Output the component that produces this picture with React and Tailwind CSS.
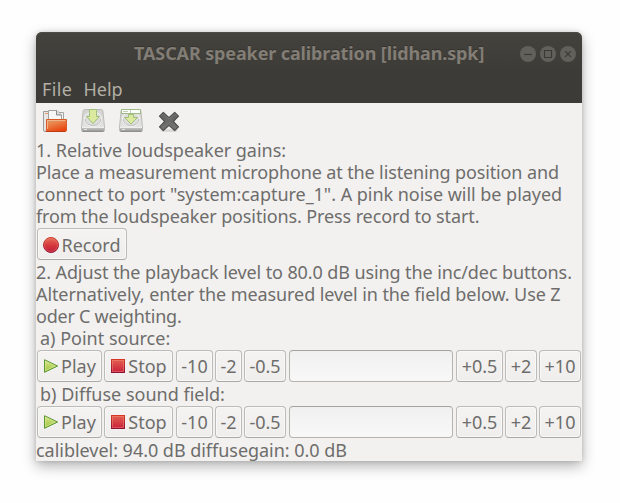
function FolderIcon() {
  return (
    <svg className="size-6 shrink-0" viewBox="0 0 24 24" fill="none">
      <defs>
        <linearGradient id="folder" x1="0" y1="0" x2="0.5" y2="1">
          <stop offset="0" stopColor="#dfa16c" />
          <stop offset="0.45" stopColor="#ea8047" />
          <stop offset="1" stopColor="#e8480f" />
        </linearGradient>
      </defs>
      <path d="M0.5 2.5H6V22.5H2Q0.5 22.5 0.5 21Z" fill="#e6e6e4" stroke="#9b9b99" />
      <path d="M2 4.5H5" stroke="#e59a6c" />
      <path d="M15 3.5H20.5V12H15Z" fill="#f3f3f2" stroke="#a5a5a3" />
      <path d="M5.5 1.5H14L18.5 6V12H5.5Z" fill="#f7f7f6" stroke="#a0a09e" />
      <path d="M13.5 1.5V6H18.5" fill="#d9d9d7" stroke="#8c8c8a" />
      <path d="M3.5 10.5H23.5V21Q23.5 22.5 22 22.5H3Q3.5 21.5 3.5 20Z" fill="url(#folder)" stroke="#d95a27" />
      <path d="M4.5 20V11.5H22.5" stroke="#f3c09b" strokeOpacity="0.75" />
      <path d="M3 22.5H22" stroke="#bd3c18" />
    </svg>
  );
}

function DriveIcon({ withWindow }) {
  return (
    <svg className="size-6 shrink-0" viewBox="0 0 24 24" fill="none">
      <defs>
        <linearGradient id="drive" x1="0" y1="0" x2="0" y2="1">
          <stop offset="0" stopColor="#d2d2d0" />
          <stop offset="1" stopColor="#e7e7e5" />
        </linearGradient>
        <linearGradient id="slot" x1="0" y1="0" x2="0" y2="1">
          <stop offset="0" stopColor="#c9c9c7" />
          <stop offset="1" stopColor="#979795" />
        </linearGradient>
      </defs>
      <path d="M3.5 0.5H20.5Q21.6 0.5 21.9 2L23.5 18V21.5Q23.5 22.5 22.5 22.5H1.5Q0.5 22.5 0.5 21.5V18L2.1 2Q2.4 0.5 3.5 0.5Z" fill="url(#drive)" stroke="#bcbcba" />
      <ellipse cx="12" cy="10" rx="8.6" ry="7.3" fill="#dddddb" stroke="#f4f4f3" />
      <path d="M4 10A8 6.5 0 0 0 20 10" stroke="#c0c0be" />
      <path d="M1 18.5H23V21.5Q23 22.3 22 22.3H2Q1 22.3 1 21.5Z" fill="url(#slot)" />
      <path d="M1 18.3H23" stroke="#f4f4f3" />
      <path d="M3 20.5H6" stroke="#e5e5e3" />
      <path d="M1.5 22.5H22.5" stroke="#8e8e8c" />
      {withWindow ? (
        <>
          <path d="M2.5 0.5H21.5V4.5H2.5Z" fill="#fcfdf8" stroke="#9dba87" />
          <path d="M4 2.5H9M11.5 1V4" stroke="#c4cfba" />
          <path d="M9.5 5.5H14.5V8.5H18.5L12 15L5.5 8.5H9.5Z" fill="#dcea9f" stroke="#9fbf7a" />
        </>
      ) : (
        <path d="M8.5 0.5H15.5V7.5H18.5L12 14.5L5.5 7.5H8.5Z" fill="#dcea9f" stroke="#9fbf7a" />
      )}
    </svg>
  );
}

function CrossIcon() {
  return (
    <svg className="size-6 shrink-0" viewBox="0 0 24 24" fill="none">
      <defs>
        <linearGradient id="cross" x1="0" y1="0" x2="0" y2="1">
          <stop offset="0" stopColor="#5f605d" />
          <stop offset="1" stopColor="#777875" />
        </linearGradient>
      </defs>
      <ellipse cx="12" cy="21.5" rx="9" ry="1.6" fill="#000" fillOpacity="0.1" />
      <path d="M6.3 3.5L12 8.6L17.7 3.5L21.5 7.2L16.3 12.5L21.5 17.8L17.7 21.5L12 16.4L6.3 21.5L2.5 17.8L7.7 12.5L2.5 7.2Z" fill="url(#cross)" stroke="#50514e" strokeWidth="1.2" strokeLinejoin="round" />
      <path d="M4 7L6.2 5L12 10.2L17.8 5L20 7" stroke="#8c8d8a" strokeOpacity="0.55" />
    </svg>
  );
}

function PlayIcon() {
  return (
    <svg className="size-4 shrink-0" viewBox="0 0 16 16">
      <defs>
        <linearGradient id="play" x1="0" y1="0" x2="0" y2="1">
          <stop offset="0" stopColor="#d5e588" />
          <stop offset="1" stopColor="#9cc43a" />
        </linearGradient>
      </defs>
      <path d="M1.5 1.7L14.6 8L1.5 14.3Z" fill="url(#play)" stroke="#5a9630" strokeLinejoin="round" />
      <path d="M2.5 3.4L12.2 8L2.5 12.6Z" fill="none" stroke="#e5f0b2" strokeOpacity="0.6" strokeWidth="0.8" />
    </svg>
  );
}

function StopIcon() {
  return (
    <svg className="size-4 shrink-0" viewBox="0 0 16 16">
      <defs>
        <linearGradient id="stop" x1="0" y1="0" x2="0" y2="1">
          <stop offset="0" stopColor="#e5604f" />
          <stop offset="1" stopColor="#c8203c" />
        </linearGradient>
        <linearGradient id="stopEdge" x1="0" y1="0" x2="0" y2="1">
          <stop offset="0" stopColor="#d53722" />
          <stop offset="1" stopColor="#8c1238" />
        </linearGradient>
      </defs>
      <rect x="1.5" y="1.5" width="13" height="13" fill="url(#stop)" stroke="url(#stopEdge)" />
      <rect x="2.5" y="2.5" width="11" height="11" fill="none" stroke="#f09a88" strokeOpacity="0.4" />
    </svg>
  );
}

function RecordIcon() {
  return (
    <svg className="size-4 shrink-0" viewBox="0 0 16 16">
      <defs>
        <linearGradient id="record" x1="0" y1="0" x2="0" y2="1">
          <stop offset="0" stopColor="#e8705a" />
          <stop offset="0.5" stopColor="#d63a3c" />
          <stop offset="1" stopColor="#c01c3c" />
        </linearGradient>
        <linearGradient id="recordEdge" x1="0" y1="0" x2="0" y2="1">
          <stop offset="0" stopColor="#cf3a28" />
          <stop offset="1" stopColor="#8c1638" />
        </linearGradient>
      </defs>
      <circle cx="8" cy="8" r="7.5" fill="url(#record)" stroke="url(#recordEdge)" />
      <circle cx="8" cy="8" r="6.5" fill="none" stroke="#f09a88" strokeOpacity="0.3" />
    </svg>
  );
}

function Button({ className, children }) {
  return (
    <button
      className={`flex h-8 shrink-0 items-center justify-center rounded-[4px] border border-[#bcbbb8] border-b-[#a9a8a5] bg-linear-to-b from-[#f4f3f2] to-[#efeeed] pt-px whitespace-pre shadow-[inset_0_0_0_1px_#f9f8f8] ${className}`}
    >
      {children}
    </button>
  );
}

function Line({ className = '', children }) {
  return <div className={`h-[22px] whitespace-pre ${className}`}>{children}</div>;
}

function LevelRow() {
  return (
    <div className="flex h-[34px] items-center pb-px pl-px">
      <Button className="w-[65px]">
        <PlayIcon />
        <span className="ml-0.5 tracking-[0.1px]">Play</span>
      </Button>
      <Button className="ml-0.5 w-[69px]">
        <StopIcon />
        <span className="ml-0.5">Stop</span>
      </Button>
      <Button className="ml-[3px] w-[37px]">-10</Button>
      <Button className="ml-0.5 w-[27px]">-2</Button>
      <Button className="ml-0.5 w-[42px]">-0.5</Button>
      <input
        className="ml-[3px] h-8 w-[164px] rounded-[4px] border border-[#b5b4b1] border-t-[#a4a3a0] bg-linear-to-b from-[#f0f0f0] to-[#f8f8f8] px-2 outline-none"
        aria-label="Measured level"
      />
      <Button className="ml-[3px] w-[47px]">+0.5</Button>
      <Button className="ml-0.5 w-8">+2</Button>
      <Button className="ml-0.5 w-[42px]">+10</Button>
    </div>
  );
}

function WindowControls() {
  return (
    <div className="flex gap-1">
      {['M4 8.5H12', 'M4.5 4.5H11.5V11.5H4.5Z', 'M5.2 5.2L10.8 10.8M10.8 5.2L5.2 10.8'].map((d) => (
        <svg key={d} className="size-4" viewBox="0 0 16 16" fill="none">
          <circle cx="8" cy="8" r="8" fill="#61605b" />
          <path d={d} stroke="#3a3935" strokeWidth="1.1" />
        </svg>
      ))}
    </div>
  );
}

export default function App() {
  return (
    <div className="h-[503px] w-[620px] overflow-hidden bg-[#fefefe] pt-8 pl-9 font-['Noto_Sans','DejaVu_Sans',sans-serif] text-[18px] leading-[22px] text-[#6e6d6b]">
      <div className="h-[429px] w-[546px] rounded-t-[6px] bg-[#f2f1f0] shadow-[0_5px_14px_rgba(0,0,0,0.3),0_0_5px_rgba(0,0,0,0.14)]">
        <header className="h-[71px] rounded-t-[6px] bg-linear-to-b from-[#43423d] to-[#3c3b37] to-60% shadow-[inset_0_1px_0_#4c4b46]">
          <div className="flex h-[43px] items-center pr-[6px] pl-[98px]">
            <h1 className="flex-1 pb-0.5 font-bold tracking-[-0.12px] whitespace-pre text-[#827d75] [text-shadow:0_-1px_0_#33322e]">
              TASCAR speaker calibration [lidhan.spk]
            </h1>
            <WindowControls />
          </div>
          <nav className="flex gap-[11px] pt-[3px] pl-1.5 text-[#b3afa5]">
            <span className="tracking-[0.4px]">File</span>
            <span>Help</span>
          </nav>
        </header>
        <div className="flex h-9 gap-3.5 pt-1.5 pl-[7px]">
          <FolderIcon />
          <DriveIcon />
          <DriveIcon withWindow />
          <CrossIcon />
        </div>
        <Line className="tracking-[-0.03px]">1. Relative loudspeaker gains:</Line>
        <Line className="tracking-[-0.13px]">Place a measurement microphone at the listening position and</Line>
        <Line className="tracking-[-0.03px]">connect to port "system:capture_1". A pink noise will be played</Line>
        <Line className="tracking-[-0.12px]">from the loudspeaker positions. Press record to start.</Line>
        <div className="h-[34px] pt-px pl-px">
          <Button className="w-[90px]">
            <RecordIcon />
            <span className="ml-0.5">Record</span>
          </Button>
        </div>
        <Line className="tracking-[-0.1px]">2. Adjust the playback level to 80.0 dB using the inc/dec buttons.</Line>
        <Line className="tracking-[-0.09px]">Alternatively, enter the measured level in the field below. Use Z</Line>
        <Line className="tracking-[-0.24px]">oder C weighting.</Line>
        <Line className="pl-1">a) Point source:</Line>
        <LevelRow />
        <Line className="pl-1">b) Diffuse sound field:</Line>
        <LevelRow />
        <Line className="tracking-[-0.03px]">caliblevel: 94.0 dB diffusegain: 0.0 dB</Line>
      </div>
    </div>
  );
}
